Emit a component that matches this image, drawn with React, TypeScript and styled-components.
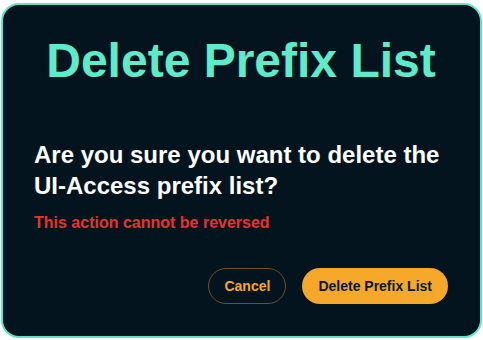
import React, { type FC } from 'react'
import styled, { createGlobalStyle } from 'styled-components'

const GlobalStyle = createGlobalStyle`
  html, body {
    margin: 0;
    padding: 0;
    background: #ffffff;
  }
  body {
    font-family: "Liberation Sans", Arial, Helvetica, sans-serif;
  }
`

const Page = styled.div`
  padding: 3px 1px 2px 1px;
`

const Dialog = styled.div`
  box-sizing: border-box;
  width: 481px;
  height: 335px;
  display: flex;
  flex-direction: column;
  padding: 28px 32px 32px 31px;
  background-color: #03141f;
  border: 2px solid #5fe3c8;
  border-radius: 18px;
`

const Title = styled.h1`
  margin: 0;
  text-align: center;
  font-size: 48px;
  font-weight: 700;
  line-height: normal;
  color: #5debc9;
`

const Question = styled.p`
  margin: 51px 0 0;
  font-size: 24px;
  font-weight: 700;
  line-height: 31px;
  color: #ffffff;
`

const Warning = styled.p`
  margin: 13px 0 0;
  font-size: 16px;
  font-weight: 700;
  line-height: normal;
  color: #e8322b;
`

const Actions = styled.div`
  margin-top: auto;
  display: flex;
  justify-content: flex-end;
  gap: 16px;
`

const ActionButton = styled.button<{ $primary?: boolean }>`
  box-sizing: border-box;
  height: 36px;
  padding: 0 ${({ $primary }) => ($primary ? 16 : 15)}px;
  border-radius: 18px;
  font-family: inherit;
  font-size: 14px;
  font-weight: 700;
  cursor: pointer;
  border: ${({ $primary }) => ($primary ? 'none' : '1px solid #6a5321')};
  background: ${({ $primary }) => ($primary ? '#f5a82a' : 'transparent')};
  color: ${({ $primary }) => ($primary ? '#0a1820' : '#f5a72a')};
`

const App: FC = () => {
  return <Page>
    <GlobalStyle />
    <Dialog>
      <Title>Delete Prefix List</Title>
      <Question>Are you sure you want to delete the UI-Access prefix list?</Question>
      <Warning>This action cannot be reversed</Warning>
      <Actions>
        <ActionButton type="button">Cancel</ActionButton>
        <ActionButton type="button" $primary>Delete Prefix List</ActionButton>
      </Actions>
    </Dialog>
  </Page>
}

export default App
